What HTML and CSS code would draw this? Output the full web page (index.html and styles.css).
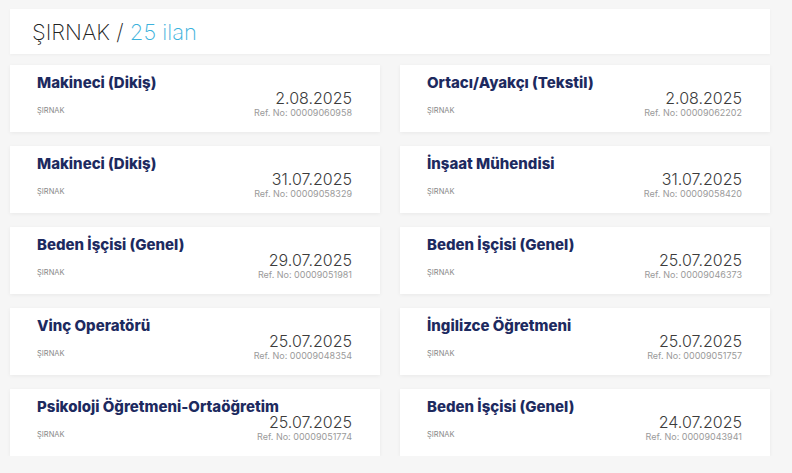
FILE: index.html
```html
<!DOCTYPE html>
<html lang="tr">
<head>
<meta charset="utf-8">
<link rel="stylesheet" href="styles.css">
</head>
<body>
<div class="page">
  <div class="header"><span class="city">ŞIRNAK</span> <span class="slash">/</span> <span class="count">25 ilan</span></div>
  <div class="grid">
    <div class="card"><div class="title">Makineci (Dikiş)</div><div class="row"><div class="loc">ŞIRNAK</div><div class="meta"><div class="date">2.08.2025</div><div class="ref">Ref. No: 00009060958</div></div></div></div>
    <div class="card"><div class="title">Ortacı/Ayakçı (Tekstil)</div><div class="row"><div class="loc">ŞIRNAK</div><div class="meta"><div class="date">2.08.2025</div><div class="ref">Ref. No: 00009062202</div></div></div></div>
    <div class="card"><div class="title">Makineci (Dikiş)</div><div class="row"><div class="loc">ŞIRNAK</div><div class="meta"><div class="date">31.07.2025</div><div class="ref">Ref. No: 00009058329</div></div></div></div>
    <div class="card"><div class="title">İnşaat Mühendisi</div><div class="row"><div class="loc">ŞIRNAK</div><div class="meta"><div class="date">31.07.2025</div><div class="ref">Ref. No: 00009058420</div></div></div></div>
    <div class="card"><div class="title">Beden İşçisi (Genel)</div><div class="row"><div class="loc">ŞIRNAK</div><div class="meta"><div class="date">29.07.2025</div><div class="ref">Ref. No: 00009051981</div></div></div></div>
    <div class="card"><div class="title">Beden İşçisi (Genel)</div><div class="row"><div class="loc">ŞIRNAK</div><div class="meta"><div class="date">25.07.2025</div><div class="ref">Ref. No: 00009046373</div></div></div></div>
    <div class="card"><div class="title">Vinç Operatörü</div><div class="row"><div class="loc">ŞIRNAK</div><div class="meta"><div class="date">25.07.2025</div><div class="ref">Ref. No: 00009048354</div></div></div></div>
    <div class="card"><div class="title">İngilizce Öğretmeni</div><div class="row"><div class="loc">ŞIRNAK</div><div class="meta"><div class="date">25.07.2025</div><div class="ref">Ref. No: 00009051757</div></div></div></div>
    <div class="card"><div class="title">Psikoloji Öğretmeni-Ortaöğretim</div><div class="row"><div class="loc">ŞIRNAK</div><div class="meta"><div class="date">25.07.2025</div><div class="ref">Ref. No: 00009051774</div></div></div></div>
    <div class="card"><div class="title">Beden İşçisi (Genel)</div><div class="row"><div class="loc">ŞIRNAK</div><div class="meta"><div class="date">24.07.2025</div><div class="ref">Ref. No: 00009043941</div></div></div></div>
  </div>
</div>
</body>
</html>
```

FILE: styles.css
```css
html, body {
  margin: 0;
  padding: 0;
  background: #f6f6f6;
  font-family: Inter, "Noto Sans", sans-serif;
}
.page {
  width: 760px;
  padding: 9px 22px 0 10px;
}
.header {
  background: #fff;
  height: 45px;
  box-sizing: border-box;
  padding-top: 9px;
  padding-left: 22px;
  font-size: 22px;
  font-weight: 200;
  line-height: 28px;
  color: #222;
  box-shadow: 0 1px 3px rgba(0,0,0,0.04);
}
.count { color: #3cb2dc; }
.grid {
  margin-top: 11px;
  display: grid;
  grid-template-columns: 370px 370px;
  column-gap: 20px;
  row-gap: 14px;
}
.card {
  background: #fff;
  height: 67px;
  box-sizing: border-box;
  padding: 9px 28px 0 27px;
  box-shadow: 0 1px 4px rgba(0,0,0,0.06);
}
.title {
  font-size: 15px;
  font-weight: 800;
  line-height: 18px;
  color: #1d2a5f;
  white-space: nowrap;
}
.row {
  display: flex;
  justify-content: space-between;
  align-items: flex-end;
}
.loc {
  font-size: 7.5px;
  color: #8a8a8a;
  line-height: 10px;
  margin-bottom: 2px;
}
.meta {
  text-align: right;
  margin-top: -3px;
}
.date {
  font-size: 16px;
  font-weight: 300;
  line-height: 18px;
  color: #3c3c3c;
}
.ref {
  font-size: 9px;
  line-height: 11px;
  color: #9a9a9a;
}
```
